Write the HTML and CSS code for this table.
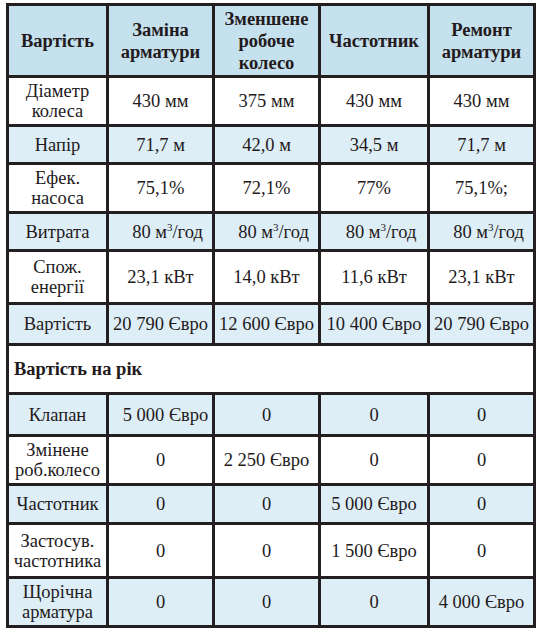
FILE: index.html
```html
<!DOCTYPE html>
<html lang="uk">
<head>
<meta charset="utf-8">
<title>Вартість</title>
<link rel="stylesheet" href="styles.css">
</head>
<body>
<table class="cost">
  <colgroup>
    <col class="c1"><col class="c2"><col class="c3"><col class="c4"><col class="c5">
  </colgroup>
  <thead>
    <tr class="h-head">
      <th>Вартість</th>
      <th>Заміна<br>арматури</th>
      <th>Зменшене<br>робоче<br>колесо</th>
      <th>Частотник</th>
      <th>Ремонт<br>арматури</th>
    </tr>
  </thead>
  <tbody>
    <tr class="h46">
      <td>Діаметр<br>колеса</td><td>430 мм</td><td>375 мм</td><td>430 мм</td><td>430 мм</td>
    </tr>
    <tr class="h35 band">
      <td>Напір</td><td>71,7 м</td><td>42,0 м</td><td>34,5 м</td><td>71,7 м</td>
    </tr>
    <tr class="h46">
      <td>Ефек.<br>насоса</td><td>75,1%</td><td>72,1%</td><td>77%</td><td>75,1%;</td>
    </tr>
    <tr class="h35 band">
      <td>Витрата</td>
      <td class="shift">80 м<sup>3</sup>/год</td>
      <td class="shift">80 м<sup>3</sup>/год</td>
      <td class="shift">80 м<sup>3</sup>/год</td>
      <td class="shift">80 м<sup>3</sup>/год</td>
    </tr>
    <tr class="h50">
      <td>Спож.<br>енергії</td><td>23,1 кВт</td><td>14,0 кВт</td><td>11,6 кВт</td><td>23,1 кВт</td>
    </tr>
    <tr class="h38 band">
      <td>Вартість</td><td>20 790 Євро</td><td>12 600 Євро</td><td>10 400 Євро</td><td>20 790 Євро</td>
    </tr>
    <tr class="h46">
      <td colspan="5" class="section">Вартість на рік</td>
    </tr>
    <tr class="h39 band">
      <td>Клапан</td><td class="shift-s">5 000 Євро</td><td>0</td><td>0</td><td>0</td>
    </tr>
    <tr class="h46">
      <td>Змінене<br>роб.колесо</td><td>0</td><td>2 250 Євро</td><td>0</td><td>0</td>
    </tr>
    <tr class="h36 band">
      <td>Частотник</td><td>0</td><td>0</td><td>5 000 Євро</td><td>0</td>
    </tr>
    <tr class="h51">
      <td>Застосув.<br>частотника</td><td>0</td><td>0</td><td>1 500 Євро</td><td>0</td>
    </tr>
    <tr class="h46 band">
      <td>Щорічна<br>арматура</td><td>0</td><td>0</td><td>0</td><td>4 000 Євро</td>
    </tr>
  </tbody>
</table>
</body>
</html>
```
FILE: styles.css
```css
html, body {
  margin: 0;
  padding: 0;
  background: #ffffff;
}

body {
  padding: 3px 0 0 6px;
  font-family: "Liberation Serif", "DejaVu Serif", serif;
  color: #231a1c;
}

.cost {
  border-collapse: collapse;
  table-layout: fixed;
  width: 530px;
  border: 3px solid #231f20;
  font-size: 18.5px;
  line-height: 20px;
}

.c1 { width: 100px; }
.c2 { width: 106px; }
.c3 { width: 106px; }
.c4 { width: 109px; }
.c5 { width: 106px; }

.cost th,
.cost td {
  border: 3px solid #231f20;
  padding: 0;
  text-align: center;
  vertical-align: middle;
  white-space: nowrap;
}

.cost th {
  background: #c5e1ee;
  font-weight: bold;
  font-size: 18.5px;
  line-height: 22px;
}

.band td {
  background: #deeef6;
}

.h-head th { height: 69px; }
.h46 td { height: 46px; }
.h35 td { height: 35px; }
.h36 td { height: 36px; }
.h38 td { height: 38px; }
.h39 td { height: 39px; }
.h50 td { height: 50px; }
.h51 td { height: 51px; }

.cost sup {
  font-size: 11px;
  line-height: 0;
  vertical-align: 7px;
}

.cost td.shift { padding-left: 14px; }
.cost td.shift-s { padding-left: 10px; }

.cost td.section {
  text-align: left;
  font-weight: bold;
  padding-left: 5px;
}
```
